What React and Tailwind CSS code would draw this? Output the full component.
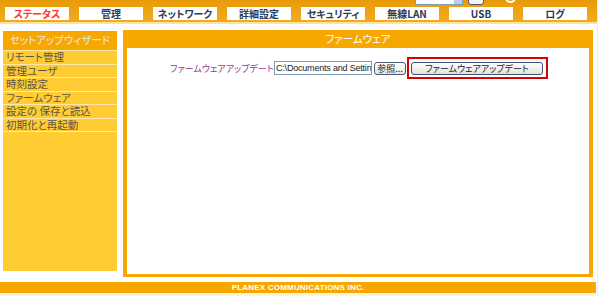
export default function App() {
  const nav = ["ステータス", "管理", "ネットワーク", "詳細設定", "セキュリティ", "無線LAN", "USB", "ログ"];
  const menu = ["リモート管理", "管理ユーザ", "時刻設定", "ファームウェア", "設定の 保存と読込", "初期化と再起動"];
  const jp = { fontFamily: '"Noto Sans CJK JP", "Noto Sans", sans-serif', fontFeatureSettings: '"palt"' };
  return (
    <div className="relative w-[600px] h-[296px] overflow-hidden bg-white" style={jp}>
      {/* header */}
      <div className="relative w-[597px] h-[22px] bg-gradient-to-b from-[#e99a08] to-[#f1ac1c]">
        <div className="absolute left-[415px] top-[-9px] w-[48px] h-[14px] bg-white border border-[#7f9db9] flex justify-end">
          <div className="w-[8px] h-full bg-[#b8cdf0]"></div>
        </div>
        <div className="absolute left-[468px] top-[-9px] w-[16px] h-[14px] bg-[#f2f2f2] border border-[#557] rounded-[3px]"></div>
        <div className="absolute left-[505px] top-[-8px] w-[11px] h-[11px] rounded-full border-2 border-white"></div>
        <div className="flex gap-[10px] pl-[5px] pt-[7px]">
          {nav.map((n, i) => (
            <div
              key={n}
              className={`w-[64px] h-[13px] bg-white flex items-center justify-center text-[10px] font-bold leading-none ${i === 0 ? "text-[#ff3333]" : "text-[#2c3a5c]"}`}
            >
              {n}
            </div>
          ))}
        </div>
      </div>
      <div className="w-[597px] h-[2px] bg-[#fbe3a0]"></div>
      {/* body */}
      <div className="flex mt-[6px] w-[597px]">
        <div className="ml-[3px] mt-[1px] w-[114px] h-[240px] bg-[#ffcc33] flex flex-col">
          <div className="h-[19px] bg-[#f6a800] flex items-center justify-center text-[10.5px] font-medium text-[#ecdfc4] leading-none">
            セットアップウィザード
          </div>
          {menu.map((m) => (
            <div key={m} className="h-[13.5px] border-t border-[#ffe9a6] pl-[3px] flex items-center text-[10.5px] leading-none text-[#5b5446] overflow-hidden">
              {m}
            </div>
          ))}
          <div className="border-t border-[#ffe9a6]"></div>
        </div>
        <div className="ml-[6px] w-[470px] h-[247px] bg-[#f7a800] px-[4px] pb-[3px] flex flex-col">
          <div className="h-[18px] flex items-center justify-center text-[10.5px] text-white leading-none">ファームウェア</div>
          <div className="flex-1 bg-white flex flex-col">
            <div className="mt-[9px] flex items-center pl-[43px]">
              <span className="w-[98px] text-[9px] text-[#993399] leading-none whitespace-nowrap text-right">ファームウェアアップデート</span>
              <div
                className="ml-[6px] w-[98px] h-[14px] border border-[#7f9db9] bg-white overflow-hidden whitespace-nowrap text-[9px] leading-[12px] pl-[1px] text-[#222] tracking-[-0.2px]"
                style={{ fontFamily: '"Liberation Sans", Arial, sans-serif' }}
              >
                C:\Documents and Settings
              </div>
              <div className="ml-[2px] w-[32px] h-[13px] border border-[#4a5a78] rounded-[3px] bg-gradient-to-b from-white to-[#e4e4e0] flex items-center justify-center text-[9px] leading-none text-[#222]">
                参照...
              </div>
              <div className="ml-[1px] border-2 border-[#dd0000] pl-[2px] pr-[3px] pt-[3px] pb-[2px] h-[22px]">
                <div className="w-[132px] h-[13px] border border-[#3c5478] rounded-[3px] bg-gradient-to-b from-white to-[#e2e2dc] flex items-center justify-center text-[9px] leading-none text-[#222]">
                  ファームウェアアップデート
                </div>
              </div>
            </div>
          </div>
        </div>
      </div>
      {/* footer */}
      <div className="mt-[5px] w-[596px] h-[11px] bg-[#f7a800] flex items-center justify-center">
        <span
          className="text-[8px] font-bold text-white leading-none tracking-[0.2px]"
          style={{ fontFamily: '"Liberation Sans", Arial, sans-serif' }}
        >
          PLANEX COMMUNICATIONS INC.
        </span>
      </div>
      <div className="w-[596px] h-[3px] bg-[#fdf3dc]"></div>
      <div className="absolute left-[597px] top-0 w-[1px] h-[296px] bg-[#eeeeee]"></div>
    </div>
  );
}
